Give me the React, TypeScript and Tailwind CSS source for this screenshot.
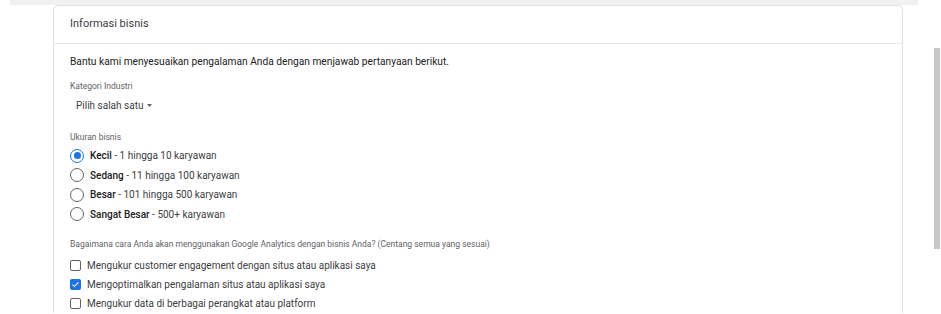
import React from "react";

interface Option {
  title: string;
  detail: string;
}

const sizes: Option[] = [
  { title: "Kecil", detail: "1 hingga 10 karyawan" },
  { title: "Sedang", detail: "11 hingga 100 karyawan" },
  { title: "Besar", detail: "101 hingga 500 karyawan" },
  { title: "Sangat Besar", detail: "500+ karyawan" },
];

const usages = [
  { label: "Mengukur customer engagement dengan situs atau aplikasi saya", checked: false },
  { label: "Mengoptimalkan pengalaman situs atau aplikasi saya", checked: true },
  { label: "Mengukur data di berbagai perangkat atau platform", checked: false },
];

const Radio: React.FC<{ on: boolean }> = ({ on }) => (
  <span
    className={`flex h-[14px] w-[14px] items-center justify-center rounded-full border-[1.5px] ${
      on ? "border-[#1a73e8]" : "border-[#5f6368]"
    }`}
  >
    {on && <span className="h-[7px] w-[7px] rounded-full bg-[#1a73e8]" />}
  </span>
);

const Checkbox: React.FC<{ on: boolean }> = ({ on }) =>
  on ? (
    <span className="flex h-[11px] w-[11px] items-center justify-center rounded-[2px] bg-[#1a73e8]">
      <svg width="9" height="9" viewBox="0 0 24 24" fill="none">
        <path d="M4 12.5l5 5L20 6.5" stroke="white" strokeWidth="3" />
      </svg>
    </span>
  ) : (
    <span className="h-[11px] w-[11px] rounded-[2px] border-[1.5px] border-[#5f6368]" />
  );

export default function App() {
  return (
    <div className="flex h-[314px] w-[941px] overflow-hidden bg-white font-['Roboto',sans-serif] text-[#202124]">
      <div className="w-[928px]">
        {/* end of previous panel */}
        <div className="ml-[10px] h-[5px] w-[908px] bg-[#f1f1f1]" />

        <div className="ml-[53px] w-[850px] rounded-t-[5px] border border-b-0 border-[#e0e0e0]">
          <div className="flex h-[38px] items-center border-b border-[#e8e8e8] px-[16px] text-[11px] text-[#3c4043]">
            Informasi bisnis
          </div>

          <div className="px-[16px] pt-[10px]">
            <p className="text-[10.2px] leading-[16px]">
              Bantu kami menyesuaikan pengalaman Anda dengan menjawab pertanyaan berikut.
            </p>

            <p className="mt-[10px] text-[8.5px] leading-[12px] text-[#5f6368]">Kategori Industri</p>
            <button className="mt-[5px] flex h-[16px] items-center gap-[4px] pl-[6px] text-[10px] text-[#3c4043]">
              Pilih salah satu
              <svg width="5" height="3" viewBox="0 0 7 4">
                <path d="M0 0h7L3.5 4z" fill="#5f6368" />
              </svg>
            </button>

            <p className="mt-[18px] text-[8.5px] leading-[12px] text-[#5f6368]">Ukuran bisnis</p>
            <div className="mt-[3px] flex flex-col">
              {sizes.map((s, i) => (
                <label key={s.title} className="flex h-[19.5px] items-center gap-[6px] text-[10px]">
                  <Radio on={i === 0} />
                  <span>
                    <b className="font-medium">{s.title}</b>
                    <span className="text-[#3c4043]"> - {s.detail}</span>
                  </span>
                </label>
              ))}
            </div>

            <p className="mt-[14px] text-[8.5px] leading-[12px] text-[#5f6368]">
              Bagaimana cara Anda akan menggunakan Google Analytics dengan bisnis Anda? (Centang semua yang sesuai)
            </p>
            <div className="mt-[6px] flex flex-col">
              {usages.map((u) => (
                <label key={u.label} className="flex h-[19px] items-center gap-[6px] text-[10px] text-[#3c4043]">
                  <Checkbox on={u.checked} />
                  {u.label}
                </label>
              ))}
            </div>
          </div>
        </div>
      </div>

      {/* scrollbar */}
      <div className="ml-[6px] pt-[48px]">
        <div className="h-[201px] w-[6px] bg-[#c8c8c8]" />
      </div>
    </div>
  );
}
